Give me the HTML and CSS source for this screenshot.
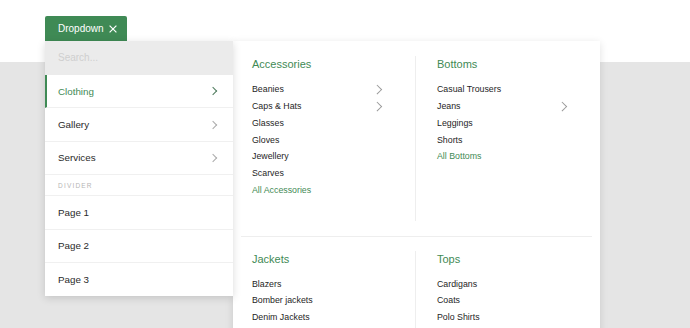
FILE: index.html
```html
<html>
  <head>
    <title>dropdown</title>
    <link rel="stylesheet" href="styles.css">
  </head>
  <body>
    <div id="top">
      <div id="nav">
        <button class="toggle">Dropdown
          <svg width="8" height="8" viewBox="0 0 8 8"><path d="M0.6 0.6L7.4 7.4M7.4 0.6L0.6 7.4" stroke="#fff" stroke-width="1.2"/></svg>
        </button>
        <div id="menu">
          <div class="search">Search...</div>
          <div class="item active">Clothing <span class="chev"></span></div>
          <div class="item">Gallery <span class="chev"></span></div>
          <div class="item">Services <span class="chev"></span></div>
          <div class="divider">Divider</div>
          <div class="item">Page 1</div>
          <div class="item">Page 2</div>
          <div class="item last">Page 3</div>
        </div>
        <div id="mega">
          <div class="row">
            <div class="col">
              <h3>Accessories</h3>
              <ul>
                <li>Beanies <span class="chev"></span></li>
                <li>Caps &amp; Hats <span class="chev"></span></li>
                <li>Glasses</li>
                <li>Gloves</li>
                <li>Jewellery</li>
                <li>Scarves</li>
                <li class="all">All Accessories</li>
              </ul>
            </div>
            <div class="col">
              <h3>Bottoms</h3>
              <ul>
                <li>Casual Trousers</li>
                <li>Jeans <span class="chev"></span></li>
                <li>Leggings</li>
                <li>Shorts</li>
                <li class="all">All Bottoms</li>
              </ul>
            </div>
          </div>
          <div class="row">
            <div class="col">
              <h3>Jackets</h3>
              <ul>
                <li>Blazers</li>
                <li>Bomber jackets</li>
                <li>Denim Jackets</li>
              </ul>
            </div>
            <div class="col">
              <h3>Tops</h3>
              <ul>
                <li>Cardigans</li>
                <li>Coats</li>
                <li>Polo Shirts</li>
              </ul>
            </div>
          </div>
        </div>
      </div>
    </div>
  </body>
</html>
```

FILE: styles.css
```css
body {
  margin: 0;
  font-family: "Liberation Sans", Arial, sans-serif;
  background: #e5e5e5;
  overflow: hidden;
}
#top {
  background: #fff;
  height: 62px;
  padding: 16px 45px 0;
  box-sizing: border-box;
}
#nav {
  position: relative;
}
.toggle {
  display: flex;
  align-items: center;
  gap: 5px;
  height: 25px;
  width: 82px;
  padding: 0 0 0 13px;
  border: none;
  border-radius: 2px 2px 0 0;
  background: #3f8a55;
  color: #fff;
  font-family: inherit;
  font-size: 10px;
}
#menu {
  position: absolute;
  top: 25px;
  left: 0;
  width: 188px;
  background: #fff;
  box-shadow: 0 2px 8px rgba(0,0,0,0.15);
  z-index: 2;
}
.search {
  height: 34px;
  line-height: 34px;
  padding-left: 13px;
  background: #ebebeb;
  color: #cfcfcf;
  font-size: 10px;
}
.item {
  display: flex;
  justify-content: space-between;
  align-items: center;
  height: 33.4px;
  box-sizing: border-box;
  padding: 0 15px 0 13px;
  border-bottom: 1px solid #f0f0f0;
  color: #2a2a2a;
  font-size: 9.8px;
}
.item.last {
  border-bottom: none;
}
.item.active {
  color: #3f8a55;
  border-left: 2px solid #3f8a55;
  padding-left: 11px;
}
.divider {
  height: 21px;
  line-height: 21px;
  padding-left: 13px;
  border-bottom: 1px solid #f0f0f0;
  box-sizing: border-box;
  color: #b5b5b5;
  font-size: 6.5px;
  letter-spacing: 1.2px;
  text-transform: uppercase;
}
.chev {
  width: 5px;
  height: 5px;
  border-top: 1px solid #aaa;
  border-right: 1px solid #aaa;
  transform: rotate(45deg);
  margin-right: 2px;
}
.item.active .chev {
  border-color: #4d7a5c;
}
#mega {
  position: absolute;
  top: 25px;
  left: 188px;
  width: 367px;
  height: 300px;
  padding: 0 8px;
  box-sizing: border-box;
  background: #fff;
  box-shadow: 0 2px 8px rgba(0,0,0,0.12);
  z-index: 1;
}
.row {
  display: flex;
  padding: 15px 0;
  border-bottom: 1px solid #eee;
}
.row + .row {
  padding-top: 14px;
  border-bottom: none;
}
.col {
  width: 174px;
  padding: 0 0 23px 11px;
  box-sizing: border-box;
}
.col + .col {
  width: 176px;
  padding-left: 21px;
  border-left: 1px solid #eee;
}
h3 {
  margin: 0 0 9px;
  font-weight: normal;
  font-size: 11px;
  line-height: 16px;
  color: #3f8a55;
}
.row + .row h3 {
  margin-bottom: 8px;
}
ul {
  list-style: none;
  margin: 0;
  padding: 0;
  width: 130px;
}
li {
  display: flex;
  justify-content: space-between;
  align-items: center;
  height: 16.75px;
  font-size: 8.8px;
  color: #1e1e1e;
}
li .chev {
  width: 5.5px;
  height: 5.5px;
  border-color: #999;
}
li.all {
  color: #3f8a55;
}
```
